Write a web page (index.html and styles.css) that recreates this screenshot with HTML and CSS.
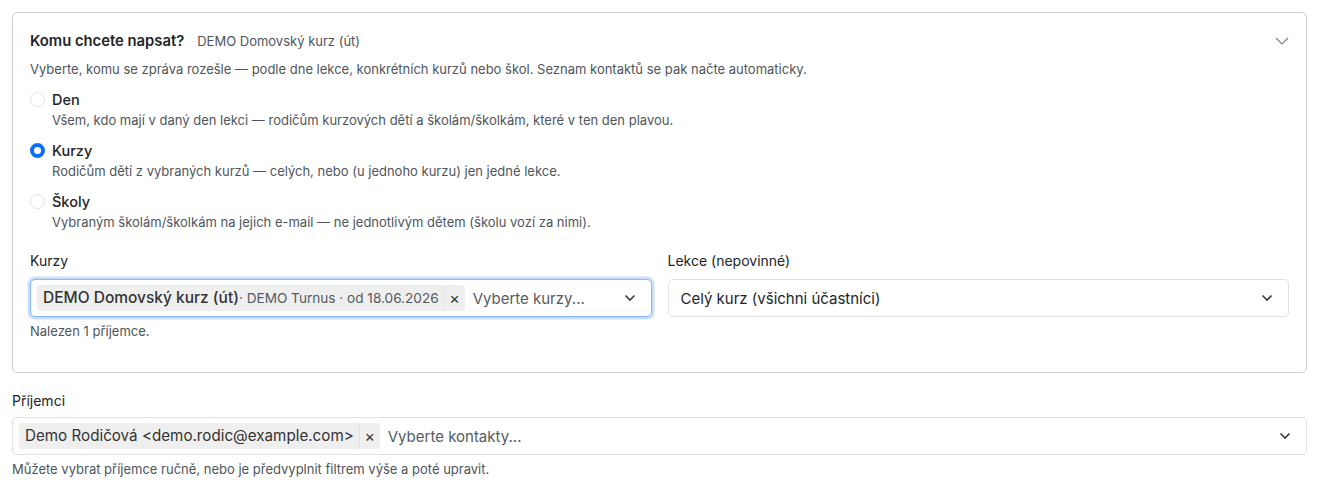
FILE: index.html
```html
<!DOCTYPE html>
<html lang="cs">
<head>
<meta charset="utf-8">
<title>Komu chcete napsat?</title>
<link rel="stylesheet" href="styles.css">
</head>
<body>
<div class="page">
  <section class="card">
    <div class="card-head">
      <div class="head-title">
        <span class="title">Komu chcete napsat?</span>
        <span class="subtitle">DEMO Domovský kurz (út)</span>
      </div>
      <svg class="head-chevron" width="14" height="8" viewBox="0 0 14 8"><path d="M1 1l6 6 6-6" fill="none" stroke="#7a7f85" stroke-width="1.2"/></svg>
    </div>
    <p class="intro">Vyberte, komu se zpráva rozešle — podle dne lekce, konkrétních kurzů nebo škol. Seznam kontaktů se pak načte automaticky.</p>

    <div class="options">
      <div class="option">
        <div class="opt-row"><span class="radio"></span><span class="opt-label">Den</span></div>
        <div class="opt-desc">Všem, kdo mají v daný den lekci — rodičům kurzových dětí a školám/školkám, které v ten den plavou.</div>
      </div>
      <div class="option">
        <div class="opt-row"><span class="radio checked"></span><span class="opt-label">Kurzy</span></div>
        <div class="opt-desc">Rodičům dětí z vybraných kurzů — celých, nebo (u jednoho kurzu) jen jedné lekce.</div>
      </div>
      <div class="option">
        <div class="opt-row"><span class="radio"></span><span class="opt-label">Školy</span></div>
        <div class="opt-desc">Vybraným školám/školkám na jejich e-mail — ne jednotlivým dětem (školu vozí za nimi).</div>
      </div>
    </div>

    <div class="fields">
      <div class="field">
        <label class="field-label">Kurzy</label>
        <div class="select focused">
          <div class="select-values">
            <span class="chip"><span class="chip-text"><span class="chip-main">DEMO Domovský kurz (út)</span><span class="chip-sub">· DEMO Turnus · od 18.06.2026</span></span><span class="chip-x">×</span></span>
            <span class="placeholder">Vyberte kurzy...</span>
          </div>
          <svg class="select-chevron" width="12" height="8" viewBox="0 0 12 8"><path d="M1.5 1.5l4.5 4.5 4.5-4.5" fill="none" stroke="#343a40" stroke-width="1.6"/></svg>
        </div>
        <div class="help">Nalezen 1 příjemce.</div>
      </div>
      <div class="field">
        <label class="field-label">Lekce (nepovinné)</label>
        <div class="select plain">
          <div class="select-values"><span class="value">Celý kurz (všichni účastníci)</span></div>
          <svg class="select-chevron" width="12" height="8" viewBox="0 0 12 8"><path d="M1.5 1.5l4.5 4.5 4.5-4.5" fill="none" stroke="#343a40" stroke-width="1.6"/></svg>
        </div>
      </div>
    </div>
  </section>

  <div class="recipients">
    <label class="field-label">Příjemci</label>
    <div class="select">
      <div class="select-values">
        <span class="chip"><span class="chip-text chip-plain">Demo Rodičová &lt;demo.rodic@example.com&gt;</span><span class="chip-x">×</span></span>
        <span class="placeholder">Vyberte kontakty...</span>
      </div>
      <svg class="select-chevron" width="12" height="8" viewBox="0 0 12 8"><path d="M1.5 1.5l4.5 4.5 4.5-4.5" fill="none" stroke="#343a40" stroke-width="1.6"/></svg>
    </div>
    <div class="help small">Můžete vybrat příjemce ručně, nebo je předvyplnit filtrem výše a poté upravit.</div>
  </div>
</div>
</body>
</html>
```

FILE: styles.css
```css
* { box-sizing: border-box; }
html, body { margin: 0; padding: 0; background: #fff; }
body {
  font-family: Inter, "Noto Sans", "Liberation Sans", sans-serif;
  color: #212529;
  font-size: 14px;
}
.page { padding: 12px 13px 0 12px; }

.card {
  border: 1px solid #c9cdd2;
  border-radius: 5px;
  padding: 18px 17px 32px 17px;
}
.card-head {
  display: flex;
  align-items: center;
  justify-content: space-between;
  height: 20px;
}
.head-title { display: flex; align-items: baseline; gap: 13px; }
.title { font-weight: 600; font-size: 14.8px; }
.subtitle { font-size: 13px; color: #4f555b; }
.head-chevron { margin-right: 0; }

.intro {
  margin: 9px 0 0 0;
  font-size: 13px;
  line-height: 18px;
  color: #4f555b;
}

.options { display: flex; flex-direction: column; gap: 11px; margin-top: 11px; }
.opt-row { display: flex; align-items: center; height: 20px; }
.radio {
  width: 15px; height: 15px;
  border-radius: 50%;
  border: 1px solid #dde1e5;
  background: #fff;
  margin-right: 7px;
  flex: none;
}
.radio.checked {
  border: 4.5px solid #0d6efd;
  background: #fff;
}
.opt-label { font-size: 14.5px; font-weight: 500; }
.opt-desc {
  margin-top: 2px;
  padding-left: 22px;
  font-size: 13px;
  line-height: 18px;
  color: #4f555b;
}

.fields {
  display: grid;
  grid-template-columns: 1fr 1fr;
  column-gap: 16px;
  margin-top: 20px;
}
.field-label {
  display: block;
  font-size: 14px;
  line-height: 20px;
  margin-bottom: 8px;
}
.select {
  height: 38px;
  border: 1px solid #dee2e6;
  border-radius: 5px;
  display: flex;
  align-items: center;
  justify-content: space-between;
  padding: 0 15px 0 6px;
  background: #fff;
}
.select.focused {
  border-color: #86b7fe;
  box-shadow: 0 0 0 2.5px rgba(13, 110, 253, 0.22);
}
.select.plain { padding-left: 12px; }
.select-values { display: flex; align-items: center; gap: 8px; min-width: 0; }
.chip {
  display: flex;
  align-items: stretch;
  height: 26px;
  background: #efefef;
  border-radius: 4px;
  color: #333;
}
.chip-text {
  display: flex;
  align-items: baseline;
  padding: 0 5px 0 6px;
  font-size: 15.5px;
  line-height: 26px;
  white-space: nowrap;
}
.chip-text.chip-plain { font-size: 15.2px; }
.chip-main { font-weight: 500; }
.chip-sub { font-size: 13.6px; color: #555b61; }
.chip-x {
  display: flex;
  align-items: center;
  justify-content: center;
  width: 21px;
  border-left: 1px solid #e2e2e2;
  font-size: 16px;
  color: #333;
}
.placeholder { font-size: 15px; color: #555b61; white-space: nowrap; }
.value { font-size: 15px; color: #212529; }
.select-chevron { flex: none; }

.help {
  margin-top: 5px;
  font-size: 13px;
  line-height: 18px;
  color: #4f555b;
}

.recipients { margin-top: 18px; }
.recipients .field-label { margin-bottom: 6px; }
.help.small { margin-top: 5px; font-size: 13px; }
```
